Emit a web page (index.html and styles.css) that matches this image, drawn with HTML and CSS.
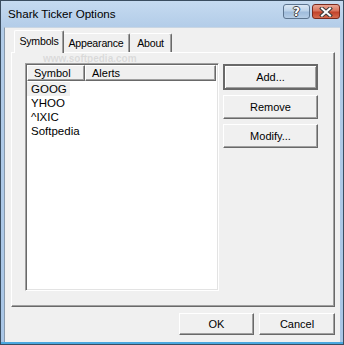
FILE: index.html
```html
<!DOCTYPE html>
<html lang="en">

<head>
  <meta charset="UTF-8" />
  <meta name="viewport" content="width=device-width, initial-scale=1.0" />
  <title>Shark Ticker Options</title>
  <link rel="stylesheet" href="styles.css">
</head>

<body>
  <div class="window">
    <div class="titlebar">
      <span class="caption">Shark Ticker Options</span>
      <div class="caption-buttons">
        <button class="cap-btn help"><span>?</span></button>
        <button class="cap-btn close">
          <svg width="14" height="10" viewBox="0 0 14 10">
            <path d="M3 1.5 L11 8.5 M11 1.5 L3 8.5" stroke="#3b3b3b" stroke-width="4" stroke-linecap="square" />
            <path d="M3 1.5 L11 8.5 M11 1.5 L3 8.5" stroke="#ffffff" stroke-width="2" stroke-linecap="square" />
          </svg>
        </button>
      </div>
    </div>

    <div class="client">
      <div class="tabs">
        <div class="tab selected tab-symbols">Symbols</div>
        <div class="tab tab-appearance">Appearance</div>
        <div class="tab tab-about">About</div>
      </div>

      <div class="panel">
        <div class="listview">
          <div class="list-header">
            <div class="col col-symbol">Symbol</div>
            <div class="col col-alerts">Alerts</div>
          </div>
          <div class="list-body">
            <div class="row"><span class="cell focused">GOOG</span></div>
            <div class="row"><span class="cell">YHOO</span></div>
            <div class="row"><span class="cell">^IXIC</span></div>
            <div class="row"><span class="cell">Softpedia</span></div>
          </div>
        </div>
        <div class="side-buttons">
          <button class="btn default">Add...</button>
          <button class="btn">Remove</button>
          <button class="btn">Modify...</button>
        </div>
      </div>

      <div class="dialog-buttons">
        <button class="btn ok">OK</button>
        <button class="btn cancel">Cancel</button>
      </div>
    </div>

    <!-- faint watermark over the dialog -->
    <div class="watermark">www.softpedia.com</div>
  </div>
</body>

</html>
```

FILE: styles.css
```css
* {
  box-sizing: border-box;
}

body {
  margin: 0;
  font-family: 'Liberation Sans', Arial, sans-serif;
  font-size: 11px;
  color: #000;
  background: #fff;
}

.window {
  position: relative;
  width: 344px;
  height: 345px;
  display: flex;
  flex-direction: column;
  padding: 0 3px 2px 3px;
  border: 1px solid #3a4d60;
  background: linear-gradient(to bottom, #c5daf0 0%, #b2cce8 8%, #a9c6e6 100%);
  box-shadow: inset 0 -2px 0 #4aa8e0;
  overflow: hidden;
}

/* Title bar */
.titlebar {
  height: 26px;
  display: flex;
  align-items: center;
  padding-left: 4px;
}

.caption {
  font-size: 11.6px;
  color: #000;
  margin-top: -2px;
}

.caption-buttons {
  margin-left: auto;
  display: flex;
  gap: 2px;
  margin-top: -5px;
}

.cap-btn {
  height: 15px;
  padding: 0;
  border: 1px solid #5d7590;
  border-radius: 3px;
  display: flex;
  align-items: center;
  justify-content: center;
}

.help {
  width: 27px;
  background: linear-gradient(to bottom, #dbe8f5 0%, #bcd2e9 45%, #9fbcdc 55%, #b5cde6 100%);
}

.help span {
  font-family: 'DejaVu Sans', sans-serif;
  font-weight: bold;
  font-size: 12px;
  line-height: 12px;
  color: #fff;
  text-shadow: -1px 0 #3f3f3f, 1px 0 #3f3f3f, 0 -1px #3f3f3f, 0 1px #3f3f3f;
}

.close {
  width: 28px;
  border-color: #7a2a1e;
  background: linear-gradient(to bottom, #e9a593 0%, #d8735d 45%, #c2432b 55%, #d66b4f 100%);
}

/* Client area */
.client {
  flex: 1;
  background: #f0f0f0;
  border-left: 1px solid #8a9aab;
  border-top: 1px solid #c9d6e3;
  display: flex;
  flex-direction: column;
  padding: 0 5px;
}

.tabs {
  height: 24px;
  display: flex;
  align-items: flex-end;
  padding-left: 4px;
  position: relative;
  z-index: 1;
}

.tab {
  height: 19px;
  padding-top: 3px;
  text-align: center;
  font-size: 10.6px;
  letter-spacing: -0.2px;
  border-top: 1px solid #fff;
  border-left: 1px solid #fff;
  border-right: 1px solid #696969;
  box-shadow: inset -1px 0 #a0a0a0;
  border-radius: 2px 2px 0 0;
  background: #f0f0f0;
  white-space: nowrap;
  overflow: hidden;
}

.tab-symbols {
  width: 50px;
}

.tab-appearance {
  width: 67px;
}

.tab-about {
  width: 42px;
}

.tab.selected {
  height: 23px;
  margin-bottom: -1px;
  padding-top: 4px;
  margin-right: -1px;
  position: relative;
  z-index: 2;
}

.tab + .tab:not(.selected) {
  border-left: none;
}

.panel {
  height: 255px;
  margin-left: 1px;
  border-top: 1px solid #fff;
  border-left: 1px solid #fff;
  border-right: 1px solid #696969;
  border-bottom: 1px solid #696969;
  box-shadow: inset -1px -1px #a0a0a0;
  display: flex;
  padding: 10px 0 0 13px;
  gap: 4px;
}

.listview {
  width: 194px;
  height: 228px;
  background: #fff;
  border-top: 1px solid #a0a0a0;
  border-left: 1px solid #a0a0a0;
  border-right: 1px solid #fff;
  border-bottom: 1px solid #fff;
  box-shadow: inset 1px 1px #696969, inset -1px -1px #e3e3e3;
  padding: 1px;
}

.list-header {
  display: flex;
  height: 16px;
}

.col {
  height: 16px;
  line-height: 14px;
  padding-left: 6px;
  background: #f0f0f0;
  border-top: 1px solid #fff;
  border-left: 1px solid #fff;
  border-right: 1px solid #696969;
  border-bottom: 1px solid #696969;
  box-shadow: inset -1px -1px #a0a0a0;
}

.col-symbol {
  width: 58px;
}

.col-alerts {
  width: 131px;
}

.list-body {
  padding-top: 1px;
}

.row {
  height: 14px;
  line-height: 14px;
  font-size: 11.5px;
}

.cell {
  display: inline-block;
  padding: 0 6px 0 4px;
}

.cell.focused {
  width: 43px;
  background: #f0f0f0;
}

.side-buttons {
  display: flex;
  flex-direction: column;
  gap: 5px;
  padding-top: 1px;
}

.btn {
  font-family: 'Liberation Sans', Arial, sans-serif;
  font-size: 11px;
  color: #000;
  background: #f0f0f0;
  width: 95px;
  height: 24px;
  padding: 0;
  border-top: 1px solid #fff;
  border-left: 1px solid #fff;
  border-right: 1px solid #696969;
  border-bottom: 1px solid #696969;
  box-shadow: inset -1px -1px #a0a0a0;
}

.btn.default {
  height: 26px;
  border: 2px solid #696969;
  box-shadow: inset 1px 1px #fff, inset -1px -1px #a0a0a0;
}

.dialog-buttons {
  display: flex;
  justify-content: flex-end;
  gap: 5px;
  padding-top: 6px;
}

.dialog-buttons .btn {
  height: 22px;
  width: 75px;
}

.dialog-buttons .cancel {
  width: 76px;
}

/* Watermark overlay */
.watermark {
  position: absolute;
  left: 42px;
  top: 52px;
  font-size: 10px;
  font-weight: bold;
  color: rgba(150, 150, 150, 0.25);
  pointer-events: none;
  white-space: nowrap;
}
```
